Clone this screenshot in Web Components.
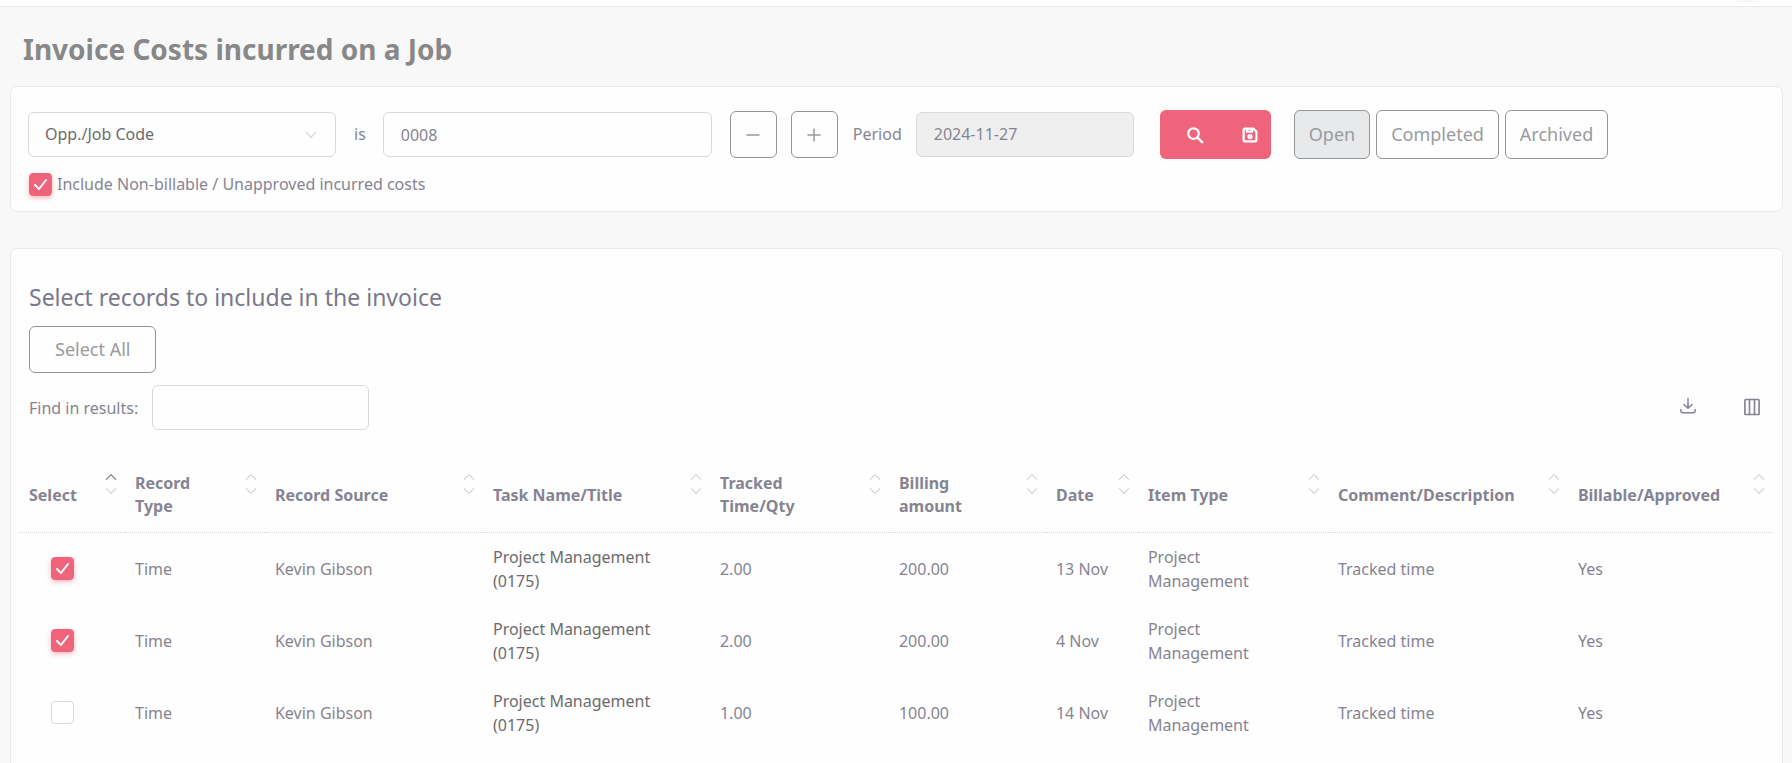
<!DOCTYPE html>
<html lang="en">
<head>
    <meta charset="utf-8">
    <title>Invoice Costs incurred on a Job</title>
    <meta name="viewport" content="width=device-width">
    <style>
        html {
            scrollbar-width: none;
        }

        body {
            margin: 0;
            background: #f8f8f8;
            color: #868492;
            font: 16px/24px "Noto Sans", "Open Sans", sans-serif;
            --line: #d9dae0;
            --card-line: #e9e9f0;
            --outline: #92959b;
            --accent: #f0647b;
            --strong: #6c6c6c;
        }

        main {
            padding: 0 9px 0 10px;
        }

        h1 {
            margin: 0;
            padding: 23px 13px 18px;
            font-size: 28px;
            line-height: 38px;
            color: #888;
        }

        filter-bar {
            margin-bottom: 36px;
        }
    </style>
</head>
<body>
<top-bar></top-bar>
<main>
    <h1>Invoice Costs incurred on a Job</h1>
    <filter-bar></filter-bar>
    <app-card>
        <record-list></record-list>
    </app-card>
</main>

<script>
    // Small helper: every element renders its markup into an open shadow root
    class BaseElement extends HTMLElement {
        constructor() {
            super();
            this.attachShadow({mode: 'open'});
        }

        connectedCallback() {
            this.shadowRoot.innerHTML = this.render();
        }
    }

    const icons = {
        minus: '<path d="M4 12h16"/>',
        plus: '<path d="M4 12h16M12 4v16"/>',
        search: '<circle cx="10" cy="10" r="7"/><path d="M15.5 15.5l6 6" stroke-width="3.4"/>',
        save: '<path d="M5 3.5h11.5l4 4V19a1.5 1.5 0 0 1-1.5 1.5H5A1.5 1.5 0 0 1 3.5 19V5A1.5 1.5 0 0 1 5 3.5z"/><path d="M8 4v3.5h6.5V4"/><circle cx="12" cy="14" r="2"/>',
        download: '<path d="M12 2v12M6.5 10l5.500 5 5.500-5"/><path d="M2.5 16.5v2a2.5 2.5 0 0 0 2.5 2.5h14a2.5 2.5 0 0 0 2.5-2.5v-2"/>',
        columns: '<rect x="3.500" y="3" width="17" height="18" rx="1"/><path d="M9 3v18M15 3v18"/>',
        up: '<path d="M4 16l8-8 8 8"/>',
        down: '<path d="M4 8l8 8 8-8"/>'
    };

    customElements.define('app-icon', class extends BaseElement {
        render() {
            const size = this.getAttribute('size') || 20;
            const stroke = this.getAttribute('stroke') || 2;
            return `
            <style>
                :host { display: inline-flex; }
                svg { display: block; fill: none; stroke: currentColor; stroke-linecap: round; stroke-linejoin: round; }
            </style>
            <svg width="${size}" height="${size}" viewBox="0 0 24 24" stroke-width="${stroke}" aria-hidden="true">${icons[this.getAttribute('name')]}</svg>`;
        }
    });

    customElements.define('top-bar', class extends BaseElement {
        render() {
            return `
            <style>
                :host { display: flex; justify-content: flex-end; height: 6px; padding-right: 28px; background: #fff; border-bottom: 1px solid var(--card-line); }
                span { width: 34px; height: 4px; background: radial-gradient(ellipse at top, #f5f5f6, #fff 70%); }
            </style>
            <span></span>`;
        }
    });

    customElements.define('app-card', class extends BaseElement {
        render() {
            return `
            <style>
                :host { display: block; background: #fefefe; border: 1px solid var(--card-line); border-radius: 7px; }
            </style>
            <slot></slot>`;
        }
    });

    customElements.define('app-button', class extends BaseElement {
        render() {
            const label = this.getAttribute('label');
            return `
            <style>
                :host { display: inline-flex; }
                button {
                    box-sizing: border-box;
                    display: flex;
                    align-items: center;
                    justify-content: center;
                    height: var(--height, 47px);
                    padding: 0 var(--pad, 14px) 2px;
                    border: 1px solid var(--outline);
                    border-radius: 6px;
                    background: transparent;
                    color: #999ba0;
                    font: inherit;
                    font-size: 18px;
                }
                :host([active]) button { background: #e8e9eb; }
                :host([square]) button { width: 47px; padding: 0; }
            </style>
            <button type="button" ${label ? `aria-label="${label}"` : ''}><slot></slot></button>`;
        }
    });

    customElements.define('app-check', class extends BaseElement {
        render() {
            return `
            <style>
                :host { display: inline-flex; }
                label { display: flex; align-items: center; gap: 5px; }
                input {
                    appearance: none;
                    box-sizing: border-box;
                    width: 23px;
                    height: 23px;
                    margin: 0;
                    border: 1px solid var(--line);
                    border-radius: 4px;
                    background: #fff;
                }
                input:checked { border-color: var(--accent); background: var(--accent); box-shadow: 0 2px 5px rgba(241, 100, 124, .45); }
                .box { display: grid; }
                .box > * { grid-area: 1 / 1; }
                svg { place-self: center; pointer-events: none; fill: none; stroke: #fff; stroke-width: 2; stroke-linecap: round; stroke-linejoin: round; }
                input:not(:checked) + svg { display: none; }
            </style>
            <label>
                <span class="box">
                    <input type="checkbox" ${this.hasAttribute('checked') ? 'checked' : ''} ${this.hasAttribute('label') ? `aria-label="${this.getAttribute('label')}"` : ''}>
                    <svg width="15" height="13" viewBox="0 0 15 13"><path d="M2 7l4 4 7-9"/></svg>
                </span>
                <slot></slot>
            </label>`;
        }
    });

    customElements.define('filter-bar', class extends BaseElement {
        render() {
            return `
            <style>
                :host { display: block; }
                .row { display: flex; align-items: center; padding: 23px 17px 0; }
                .pick { display: grid; align-items: center; width: 308px; }
                .pick > * { grid-area: 1 / 1; }
                .pick app-icon { justify-self: end; margin-right: 18px; color: #d3d4da; pointer-events: none; }
                select, input {
                    box-sizing: border-box;
                    height: 45px;
                    border: 1px solid var(--line);
                    border-radius: 6px;
                    background: transparent;
                    color: inherit;
                    font: inherit;
                    padding: 0 17px;
                }
                select { appearance: none; width: 100%; padding: 0 16px 2px; color: var(--strong); }
                .row label { padding-bottom: 2px; }
                .is { margin: 0 17px 0 18px; }
                .code { width: 329px; margin-right: 18px; }
                .steps { display: flex; gap: 14px; }
                .period { margin: 0 14px 0 15px; }
                .date { width: 218px; padding-bottom: 2px; background: #efefef; }
                .go { display: flex; margin: 0 23px 0 26px; background: var(--accent); border-radius: 6px; }
                .go button { display: flex; align-items: center; justify-content: center; height: 49px; padding: 0; border: 0; background: none; color: #fff; }
                .find { width: 70px; }
                .save { width: 41px; }
                .states { display: flex; gap: 6px; --height: 49px; }
                .extra { display: flex; padding: 13px 18px 15px; }
            </style>
            <app-card>
                <div class="row">
                    <div class="pick">
                        <select id="field" aria-label="Search field"><option>Opp./Job Code</option></select>
                        <app-icon name="down" size="14" stroke="2"></app-icon>
                    </div>
                    <label class="is" for="code">is</label>
                    <input class="code" id="code" value="0008">
                    <div class="steps">
                        <app-button square label="Remove condition"><app-icon name="minus" size="18"></app-icon></app-button>
                        <app-button square label="Add condition"><app-icon name="plus" size="18"></app-icon></app-button>
                    </div>
                    <label class="period" for="period">Period</label>
                    <input class="date" id="period" value="2024-11-27" readonly>
                    <div class="go">
                        <button class="find" type="button" aria-label="Search"><app-icon name="search" size="18" stroke="3"></app-icon></button>
                        <button class="save" type="button" aria-label="Save search"><app-icon name="save" size="18" stroke="3"></app-icon></button>
                    </div>
                    <div class="states">
                        <app-button active>Open</app-button>
                        <app-button>Completed</app-button>
                        <app-button>Archived</app-button>
                    </div>
                </div>
                <div class="extra">
                    <app-check checked>Include Non-billable / Unapproved incurred costs</app-check>
                </div>
            </app-card>`;
        }
    });

    const columns = [
        ['Select', 106], ['Record<br>Type', 140], ['Record Source', 218], ['Task Name/Title', 227],
        ['Tracked<br>Time/Qty', 179], ['Billing<br>amount', 157], ['Date', 92], ['Item Type', 190],
        ['Comment/Description', 240], ['Billable/Approved', 205]
    ];

    const records = [
        {checked: true, qty: '2.00', amount: '200.00', date: '13 Nov'},
        {checked: true, qty: '2.00', amount: '200.00', date: '4 Nov'},
        {checked: false, qty: '1.00', amount: '100.00', date: '14 Nov'}
    ];

    customElements.define('record-list', class extends BaseElement {
        render() {
            const total = columns.reduce((sum, c) => sum + c[1], 0);
            return `
            <style>
                :host { display: block; padding: 30px 9px 48px 8px; }
                h2 { margin: 0; padding: 0 10px 11px; font-size: 23px; line-height: 36px; font-weight: 400; color: #7a788c; }
                .all { display: flex; padding: 0 10px 12px; --pad: 25px; }
                .tools { display: flex; align-items: center; padding: 0 11px 0 10px; }
                .tools label { margin-right: 14px; }
                .tools input { box-sizing: border-box; width: 217px; height: 45px; padding: 0 17px; border: 1px solid var(--line); border-radius: 6px; background: transparent; color: inherit; font: inherit; }
                .actions { display: flex; gap: 45px; margin-left: auto; }
                .actions button { display: flex; padding: 0 0 2px; border: 0; background: none; color: inherit; }
                table { width: 100%; margin-top: 30px; table-layout: fixed; border-collapse: separate; border-spacing: 0; }
                th, td { height: 48px; padding: 12px 7px 12px 10px; text-align: left; }
                th { border-bottom: 1px dotted var(--line); line-height: 23px; }
                th { padding-top: 10px; padding-bottom: 14px; }
                .head { display: flex; justify-content: space-between; align-items: center; height: 48px; }
                .head span:first-child { padding-top: 2px; }
                .sort { display: flex; flex-direction: column; align-self: flex-start; color: #d3d4da; }
                .sort .on { color: #7a788c; }
                td.pick { height: 45px; padding: 12px 28px 15px 10px; text-align: center; }
                .pick app-check { vertical-align: middle; }
                .task { color: var(--strong); }
            </style>
            <h2>Select records to include in the invoice</h2>
            <div class="all"><app-button>Select All</app-button></div>
            <div class="tools">
                <label for="find">Find in results:</label>
                <input id="find">
                <div class="actions">
                    <button type="button" aria-label="Download"><app-icon name="download" size="18"></app-icon></button>
                    <button type="button" aria-label="Columns"><app-icon name="columns" size="20"></app-icon></button>
                </div>
            </div>
            <table>
                <colgroup>${columns.map(c => `<col style="width: ${c[1] / total * 100}%">`).join('')}</colgroup>
                <thead>
                    <tr>${columns.map((c, i) => `
                        <th scope="col"><div class="head"><span>${c[0]}</span>
                            <span class="sort">
                                <app-icon name="up" size="14" class="${i ? '' : 'on'}"></app-icon>
                                <app-icon name="down" size="14"></app-icon>
                            </span></div></th>`).join('')}
                    </tr>
                </thead>
                <tbody>${records.map((r, i) => `
                    <tr>
                        <td class="pick"><app-check label="Select record ${i + 1}" ${r.checked ? 'checked' : ''}></app-check></td>
                        <td>Time</td>
                        <td>Kevin Gibson</td>
                        <td class="task">Project Management<br>(0175)</td>
                        <td>${r.qty}</td>
                        <td>${r.amount}</td>
                        <td>${r.date}</td>
                        <td>Project<br>Management</td>
                        <td>Tracked time</td>
                        <td>Yes</td>
                    </tr>`).join('')}
                </tbody>
            </table>`;
        }
    });
</script>
</body>
</html>
